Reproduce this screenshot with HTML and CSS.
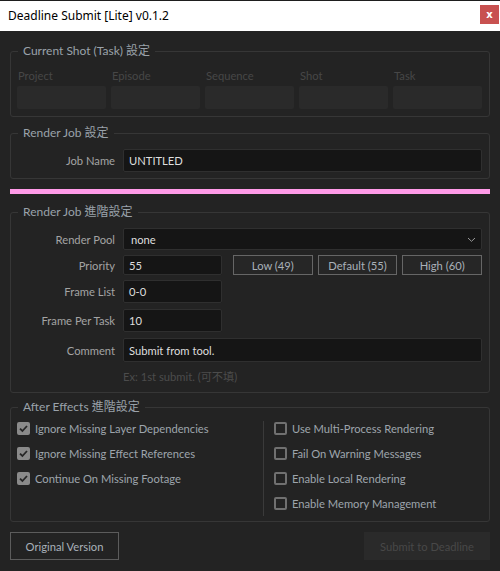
FILE: index.html
```html
<!DOCTYPE html>
<html>
<head>
<meta charset="utf-8">
<link rel="stylesheet" href="styles.css">
</head>
<body>
<div class="titlebar">
  <span class="title">Deadline Submit [Lite] v0.1.2</span>
  <span class="close">x</span>
</div>
<main class="content">
  <fieldset class="group g1">
    <legend>Current Shot (Task) 設定</legend>
    <div class="shot-row">
      <div class="shot-cell"><span class="dim">Project</span><span class="dis-input"></span></div>
      <div class="shot-cell"><span class="dim">Episode</span><span class="dis-input"></span></div>
      <div class="shot-cell"><span class="dim">Sequence</span><span class="dis-input"></span></div>
      <div class="shot-cell"><span class="dim">Shot</span><span class="dis-input"></span></div>
      <div class="shot-cell"><span class="dim">Task</span><span class="dis-input"></span></div>
    </div>
  </fieldset>

  <fieldset class="group g2">
    <legend>Render Job 設定</legend>
    <div class="form-row h23">
      <span class="label">Job Name</span>
      <span class="input wide">UNTITLED</span>
    </div>
  </fieldset>

  <div class="pink"></div>

  <fieldset class="group g3">
    <legend>Render Job 進階設定</legend>
    <div class="form-row h22">
      <span class="label">Render Pool</span>
      <span class="input wide combo">none
        <svg class="chev" width="9" height="6" viewBox="0 0 9 6"><path d="M1 1 L4.5 4.3 L8 1" fill="none" stroke="#9a9a9a" stroke-width="1"/></svg>
      </span>
    </div>
    <div class="form-row h20 mt5">
      <span class="label">Priority</span>
      <span class="input short">55</span>
      <div class="prio-btns">
        <span class="pbtn">Low (49)</span>
        <span class="pbtn">Default (55)</span>
        <span class="pbtn">High (60)</span>
      </div>
    </div>
    <div class="form-row h23 mt5">
      <span class="label">Frame List</span>
      <span class="input short">0-0</span>
    </div>
    <div class="form-row h23 mt6">
      <span class="label">Frame Per Task</span>
      <span class="input short">10</span>
    </div>
    <div class="form-row h24 mt6">
      <span class="label">Comment</span>
      <span class="input wide">Submit from tool.</span>
    </div>
    <div class="form-row hint-row">
      <span class="label"></span>
      <span class="hint">Ex: 1st submit. (可不填)</span>
    </div>
  </fieldset>

  <fieldset class="group g4">
    <legend>After Effects 進階設定</legend>
    <div class="ae-grid">
      <div class="ae-col">
        <div class="cb-row"><span class="cb on"><svg width="13" height="13" viewBox="0 0 13 13"><path d="M3 6.6 L5.4 9 L10 4" fill="none" stroke="#262626" stroke-width="1.8"/></svg></span>Ignore Missing Layer Dependencies</div>
        <div class="cb-row"><span class="cb on"><svg width="13" height="13" viewBox="0 0 13 13"><path d="M3 6.6 L5.4 9 L10 4" fill="none" stroke="#262626" stroke-width="1.8"/></svg></span>Ignore Missing Effect References</div>
        <div class="cb-row"><span class="cb on"><svg width="13" height="13" viewBox="0 0 13 13"><path d="M3 6.6 L5.4 9 L10 4" fill="none" stroke="#262626" stroke-width="1.8"/></svg></span>Continue On Missing Footage</div>
      </div>
      <div class="sep"></div>
      <div class="ae-col right">
        <div class="cb-row"><span class="cb"></span>Use Multi-Process Rendering</div>
        <div class="cb-row"><span class="cb"></span>Fail On Warning Messages</div>
        <div class="cb-row"><span class="cb"></span>Enable Local Rendering</div>
        <div class="cb-row"><span class="cb"></span>Enable Memory Management</div>
      </div>
    </div>
  </fieldset>

  <div class="bottom">
    <span class="btn">Original Version</span>
    <span class="btn disabled">Submit to Deadline</span>
  </div>
</main>
</body>
</html>
```
FILE: styles.css
```css
* { box-sizing: border-box; }
html, body { margin: 0; padding: 0; }
body {
  width: 500px;
  height: 571px;
  background: #232323;
  font-family: Lato, "Noto Sans CJK TC", sans-serif;
  font-size: 11.2px;
  color: #a8a8a8;
  overflow: hidden;
}
.titlebar {
  height: 31px;
  background: #ffffff;
  border-top: 1px solid #1e1e1e;
  display: flex;
  align-items: center;
  justify-content: space-between;
  padding-left: 8px;
  padding-right: 1px;
}
.title {
  font-family: "Noto Sans", "Noto Sans CJK TC", sans-serif;
  font-size: 12px;
  color: #000;
  margin-top: -1px;
}
.close {
  width: 19px;
  height: 19px;
  background: #c85150;
  color: #fff;
  font-family: "DejaVu Sans", sans-serif;
  font-weight: bold;
  font-size: 10px;
  display: flex;
  align-items: center;
  justify-content: center;
  margin-top: -3px;
}
.content {
  padding: 0 10px;
  display: flex;
  flex-direction: column;
}
.group {
  margin: 0;
  border: 1px solid #363636;
  border-radius: 3px;
  padding: 0 7px 0 6px;
  min-width: 0;
}
.group legend {
  padding: 0 5px;
  margin-left: 1px;
  line-height: 16px;
  font-size: 12px;
  color: #9aa2aa;
}
.g1 { margin-top: 12px; padding-top: 9px; padding-bottom: 7px; }
.g2 { margin-top: 8px; padding-top: 8px; padding-bottom: 6px; }
.g3 { margin-top: 10px; padding-top: 8px; padding-bottom: 7px; }
.g4 { margin-top: 6px; padding-top: 1px; padding-bottom: 5px; }

.pink { height: 5px; margin-top: 10px; background: #ff9be8; }

.shot-row { display: flex; gap: 5px; }
.shot-cell { display: flex; flex-direction: column; gap: 2px; width: 89px; }
.dim { line-height: 16px; color: #474747; padding-left: 1px; }
.dis-input { height: 23px; background: #2a2a2a; border-radius: 2px; }

.form-row { display: flex; align-items: stretch; }
.h20 { height: 20px; }
.h22 { height: 22px; }
.h23 { height: 23px; }
.h24 { height: 24px; }
.mt5 { margin-top: 5px; }
.mt6 { margin-top: 6px; }
.label {
  width: 98px;
  flex: none;
  text-align: right;
  margin-right: 8px;
  display: flex;
  align-items: center;
  justify-content: flex-end;
  color: #a4a4a4;
}
.input {
  background: #151515;
  border: 1px solid #2f2f2f;
  border-radius: 2px;
  color: #dedede;
  display: flex;
  align-items: center;
  padding-left: 5px;
}
.wide { flex: 1; }
.short { width: 99px; }
.combo { position: relative; padding-left: 7px; }
.chev { position: absolute; right: 5px; top: 8px; }
.prio-btns { display: flex; gap: 5px; margin-left: 11px; flex: 1; }
.pbtn {
  flex: 1;
  border: 1px solid #666;
  background: #262626;
  color: #a9b1b9;
  display: flex;
  align-items: center;
  justify-content: center;
}
.hint-row { margin-top: 7px; height: 16px; }
.hint { color: #4c4c4c; line-height: 16px; }

.ae-grid { display: flex; }
.ae-col { display: flex; flex-direction: column; }
.ae-col:first-child { width: 246px; }
.ae-col.right { padding-left: 10px; }
.sep { width: 1px; background: #3a3a3a; margin-top: 5px; }
.cb-row {
  height: 25px;
  display: flex;
  align-items: center;
  color: #9ea5ac;
}
.cb {
  width: 13px;
  height: 13px;
  border: 2px solid #707070;
  border-radius: 2px;
  margin-right: 5px;
  flex: none;
  position: relative;
}
.cb.on { background: #8a8a8a; border-color: #8a8a8a; }
.cb svg { position: absolute; left: -2px; top: -2px; }

.bottom {
  margin-top: 10px;
  display: flex;
  justify-content: space-between;
}
.btn {
  height: 28px;
  display: flex;
  align-items: center;
  justify-content: center;
  border: 1px solid #5c5c5c;
  color: #a9b1b9;
  width: 109px;
}
.btn.disabled {
  border: none;
  background: #2a2a2a;
  color: #484848;
  width: 126px;
}
```
